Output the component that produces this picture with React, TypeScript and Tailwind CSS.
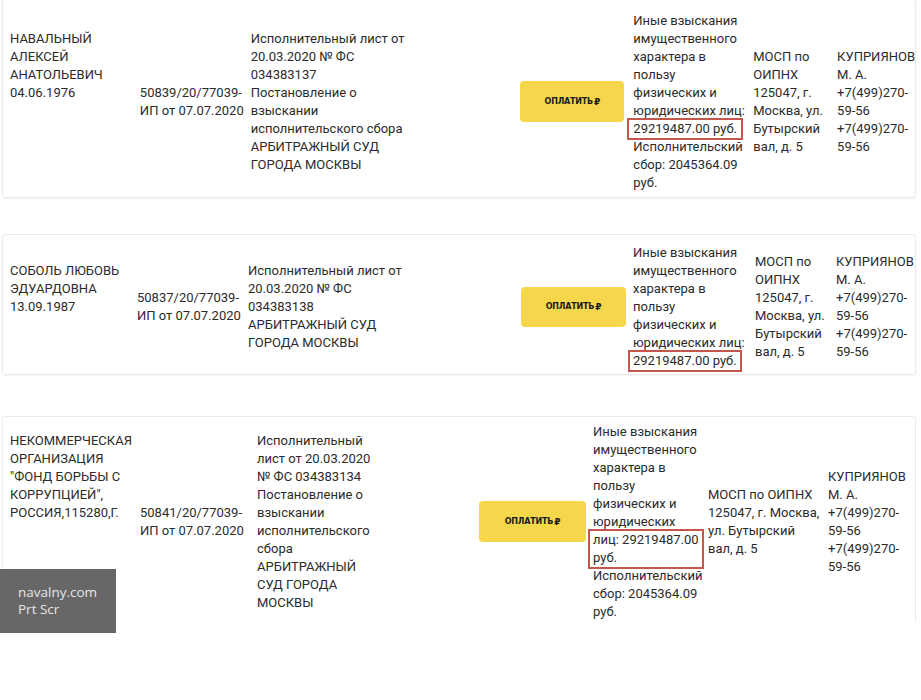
import type { ReactNode } from "react";

type Row = {
  card: string;
  name: string[];
  nameH: string;
  w: [string, string, string, string, string, string];
  btnPad: string;
  btn: string;
  num: string;
  doc: string[];
  claim: ReactNode;
  dept: string[];
};

const phones = ["КУПРИЯНОВ", "М. А.", "+7(499)270-", "59-56", "+7(499)270-", "59-56"];

function Lines({ items }: { items: string[] }) {
  return (
    <>
      {items.map((t, i) => (
        <div key={i}>{t}</div>
      ))}
    </>
  );
}

const head = ["Иные взыскания", "имущественного", "характера в", "пользу", "физических и"];

const rows: Row[] = [
  {
    card: "h-[199px] -mt-px pt-[6px]",
    name: ["НАВАЛЬНЫЙ", "АЛЕКСЕЙ", "АНАТОЛЬЕВИЧ", "04.06.1976"],
    nameH: "h-[144px]",
    w: ["w-[130px]", "w-[111px]", "w-[160px]", "w-[223px]", "w-[120px]", "w-[84px]"],
    btnPad: "pr-[9px]",
    btn: "w-[104px] h-[41px]",
    num: "50839",
    doc: [
      "Исполнительный лист от",
      "20.03.2020 № ФС",
      "034383137",
      "Постановление о",
      "взыскании",
      "исполнительского сбора",
      "АРБИТРАЖНЫЙ СУД",
      "ГОРОДА МОСКВЫ",
    ],
    claim: (
      <>
        <Lines items={[...head, "юридических лиц:"]} />
        <div className="-mx-[6px] -my-[2px] w-fit border-2 border-[#c4564b] px-[4px]">29219487.00 руб.</div>
        <Lines items={["Исполнительский", "сбор: 2045364.09", "руб."]} />
      </>
    ),
    dept: ["МОСП по", "ОИПНХ", "125047, г.", "Москва, ул.", "Бутырский", "вал, д. 5"],
  },
  {
    card: "mt-[36px] h-[141px] pt-[4px]",
    name: ["СОБОЛЬ ЛЮБОВЬ", "ЭДУАРДОВНА", "13.09.1987"],
    nameH: "h-[90px]",
    w: ["w-[127px]", "w-[111px]", "w-[160px]", "w-[225px]", "w-[122px]", "w-[81px]"],
    btnPad: "pr-[7px]",
    btn: "w-[105px] h-[40px]",
    num: "50837",
    doc: ["Исполнительный лист от", "20.03.2020 № ФС", "034383138", "АРБИТРАЖНЫЙ СУД", "ГОРОДА МОСКВЫ"],
    claim: (
      <>
        <Lines items={[...head, "юридических лиц:"]} />
        <div className="-mx-[5px] -my-[2px] w-fit border-2 border-[#c4564b] px-[3px]">29219487.00 руб.</div>
      </>
    ),
    dept: ["МОСП по", "ОИПНХ", "125047, г.", "Москва, ул.", "Бутырский", "вал, д. 5"],
  },
  {
    card: "mt-[41px] h-[207px] pt-[4px] border-b-transparent shadow-none",
    name: ["НЕКОММЕРЧЕСКАЯ", "ОРГАНИЗАЦИЯ", "\"ФОНД БОРЬБЫ С", "КОРРУПЦИЕЙ\",", "РОССИЯ,115280,Г."],
    nameH: "h-[180px]",
    w: ["w-[130px]", "w-[117px]", "w-[120px]", "w-[216px]", "w-[115px]", "w-[120px]"],
    btnPad: "pr-[7px]",
    btn: "w-[107px] h-[41px]",
    num: "50841",
    doc: [
      "Исполнительный",
      "лист от 20.03.2020",
      "№ ФС 034383134",
      "Постановление о",
      "взыскании",
      "исполнительского",
      "сбора",
      "АРБИТРАЖНЫЙ",
      "СУД ГОРОДА",
      "МОСКВЫ",
    ],
    claim: (
      <>
        <Lines items={[...head, "юридических"]} />
        <div className="-mx-[5px] -my-[2px] w-fit border-2 border-[#c4564b] px-[3px]">
          <div>лиц: 29219487.00</div>
          <div>руб.</div>
        </div>
        <Lines items={["Исполнительский", "сбор: 2045364.09", "руб."]} />
      </>
    ),
    dept: ["МОСП по ОИПНХ", "125047, г. Москва,", "ул. Бутырский", "вал, д. 5"],
  },
];

export default function App() {
  return (
    <div
      className="relative h-[700px] w-[921px] overflow-hidden bg-white text-[13px] leading-[18px] text-[#2b2b2b]"
      style={{ fontFamily: "Roboto, 'Liberation Sans', sans-serif" }}
    >
      <div className="flex w-[916px] flex-col pl-[2px]">
        {rows.map((r) => (
          <div
            key={r.num}
            className={`flex items-center whitespace-nowrap rounded-[3px] border border-[#ebebeb] pl-[7px] shadow-[0_1px_2px_rgba(0,0,0,0.05)] ${r.card}`}
          >
            <div className={`${r.w[0]} ${r.nameH} self-center`}>
              <Lines items={r.name} />
            </div>
            <div className={r.w[1]}>
              <div>{r.num}/20/77039-</div>
              <div>ИП от 07.07.2020</div>
            </div>
            <div className={r.w[2]}>
              <Lines items={r.doc} />
            </div>
            <div className={`${r.w[3]} flex justify-end ${r.btnPad}`}>
              <button
                type="button"
                className={`${r.btn} flex items-center justify-center rounded-[4px] bg-[#f6d74b] text-[8px] font-bold tracking-tight text-[#1a1a1a]`}
                style={{ fontFamily: "'DejaVu Sans', sans-serif" }}
              >
                ОПЛАТИТЬ<span className="ml-px text-[9px]">₽</span>
              </button>
            </div>
            <div className={r.w[4]}>{r.claim}</div>
            <div className={r.w[5]}>
              <Lines items={r.dept} />
            </div>
            <div className="flex-1">
              <Lines items={phones} />
            </div>
          </div>
        ))}
      </div>

      <div
        className="absolute left-0 top-[569px] flex h-[64px] w-[116px] flex-col justify-center bg-[#676767] pl-[18px] text-[13.5px] leading-[17px] text-[#e6e6e6]"
        style={{ fontFamily: "'Open Sans', 'Noto Sans', sans-serif" }}
      >
        <div>navalny.com</div>
        <div>Prt Scr</div>
      </div>
    </div>
  );
}
